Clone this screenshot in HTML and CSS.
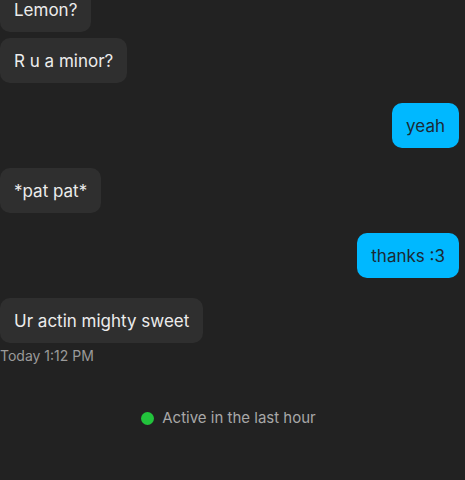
FILE: index.html
```html
<!DOCTYPE html>
<html>
<head>
<meta charset="utf-8">
<link rel="stylesheet" href="styles.css">
</head>
<body>
<div class="chat">
  <div class="msg in">Lemon?</div>
  <div class="msg in same">R u a minor?</div>
  <div class="msg out">yeah</div>
  <div class="msg in">*pat pat*</div>
  <div class="msg out">thanks :3</div>
  <div class="msg in">Ur actin mighty sweet</div>
  <div class="time">Today 1:12 PM</div>
  <div class="status"><span class="dot"></span>Active in the last hour</div>
</div>
</body>
</html>
```
FILE: styles.css
```css
html, body {
  margin: 0;
  padding: 0;
  background: #222222;
  height: 100%;
  overflow: hidden;
}
.chat {
  display: flex;
  flex-direction: column;
  margin-top: -13px;
  padding-right: 6px;
  font-family: Inter, "Noto Sans", sans-serif;
  font-size: 17px;
}
.msg {
  height: 45px;
  box-sizing: border-box;
  padding: 1px 14px 0;
  display: flex;
  align-items: center;
  border-radius: 10px;
  line-height: 21px;
  margin-top: 20px;
}
.msg:first-child { margin-top: 0; }
.msg.same { margin-top: 6px; }
.in {
  align-self: flex-start;
  background: #2f2f2f;
  color: #ececec;
}
.out {
  align-self: flex-end;
  background: #00b8ff;
  color: #1b2a35;
}
.time {
  margin-top: 4px;
  font-size: 14px;
  color: #9a9a9a;
  line-height: 18px;
}
.status {
  margin-top: 44px;
  align-self: center;
  display: flex;
  align-items: center;
  font-size: 15px;
  color: #a8a8a8;
  line-height: 18px;
  margin-left: -2px;
}
.dot {
  width: 13px;
  height: 13px;
  border-radius: 50%;
  background: #22c33c;
  margin-right: 8px;
}
```
